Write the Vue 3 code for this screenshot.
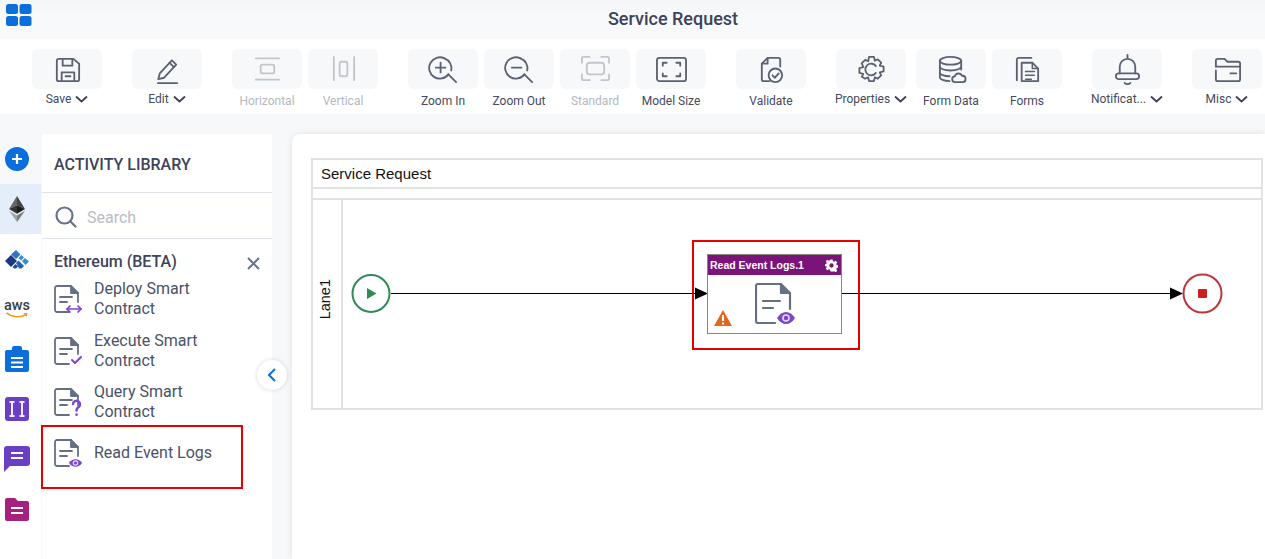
<script setup>
const toolGroups = [
  { tools: [{ id: 'save', label: 'Save', caret: true }] },
  { tools: [{ id: 'edit', label: 'Edit', caret: true }] },
  { tools: [
    { id: 'horizontal', label: 'Horizontal', off: true },
    { id: 'vertical', label: 'Vertical', off: true }
  ] },
  { tools: [
    { id: 'zoomin', label: 'Zoom In' },
    { id: 'zoomout', label: 'Zoom Out' },
    { id: 'standard', label: 'Standard', off: true },
    { id: 'model', label: 'Model Size' }
  ] },
  { tools: [{ id: 'validate', label: 'Validate' }] },
  { tools: [{ id: 'properties', label: 'Properties', caret: true }] },
  { wide: true, tools: [
    { id: 'formdata', label: 'Form Data' },
    { id: 'forms', label: 'Forms' }
  ] },
  { tools: [{ id: 'notif', label: 'Notificat...', caret: true }] },
  { tools: [{ id: 'misc', label: 'Misc', caret: true }] }
]

const activities = [
  { id: 'deploy', name: 'Deploy Smart Contract' },
  { id: 'execute', name: 'Execute Smart Contract' },
  { id: 'query', name: 'Query Smart Contract' },
  { id: 'read', name: 'Read Event Logs' }
]
</script>

<template>
  <div class="app">
    <header class="topbar">
      <svg class="logo" width="26" height="22" viewBox="0 0 26 22">
        <rect x="0" y="0" width="12" height="10" rx="2.5" />
        <rect x="13.500" y="0" width="12" height="10" rx="2.5" />
        <rect x="0" y="12" width="12" height="10" rx="2.5" />
        <rect x="13.500" y="12" width="12" height="10" rx="2.5" />
      </svg>
      <h1>Service Request</h1>
    </header>

    <nav class="toolbar">
      <div
        v-for="(group, g) in toolGroups"
        :key="g"
        class="tool-group"
        :class="{ wide: group.wide }"
      >
        <div
          v-for="tool in group.tools"
          :key="tool.id"
          class="tool"
          :class="{ off: tool.off, 'has-caret': tool.caret }"
        >
          <div class="tool-box">
            <svg viewBox="0 0 32 32" fill="none" stroke="currentColor" stroke-width="1.900" stroke-linecap="round" stroke-linejoin="round">
              <template v-if="tool.id === 'save'">
                <path d="M7 5h15l6 5v16a2 2 0 0 1-2 2H7a2 2 0 0 1-2-2V7a2 2 0 0 1 2-2z" />
                <path d="M11 5v7h10V5" />
                <path d="M10 28v-9h13v9" />
                <path d="M14 23h5" />
              </template>
              <template v-else-if="tool.id === 'edit'">
                <path d="M8 20l-1.500 6 6-1.500L25 11l-4.500-4.500z" />
                <path d="M18 9l4.500 4.500" />
                <path d="M6 30h20" />
              </template>
              <template v-else-if="tool.id === 'horizontal'">
                <path d="M4 4.500h24M4 26.500h24" />
                <rect x="9" y="11" width="14" height="9" rx="2" />
              </template>
              <template v-else-if="tool.id === 'vertical'">
                <path d="M6 3v24M27 3v24" />
                <rect x="12" y="8" width="8" height="15" rx="2" />
              </template>
              <template v-else-if="tool.id === 'zoomin'">
                <path d="M17 4.500a11 11 0 1 0 4 16.500" />
                <path d="M24 17a11 11 0 0 0-7-12.500" />
                <path d="M21 21l8 8M13 9v10M8 14h10" />
              </template>
              <template v-else-if="tool.id === 'zoomout'">
                <path d="M17 4.500a11 11 0 1 0 4 16.500" />
                <path d="M24 17a11 11 0 0 0-7-12.500" />
                <path d="M21 21l8 8M8 14h10" />
              </template>
              <template v-else-if="tool.id === 'standard'">
                <path d="M2 9V5a2 2 0 0 1 2-2h6M22 3h6a2 2 0 0 1 2 2v4M30 21v4a2 2 0 0 1-2 2h-6M10 27H4a2 2 0 0 1-2-2v-4" />
                <rect x="7" y="9" width="18" height="12" rx="3" />
              </template>
              <template v-else-if="tool.id === 'model'">
                <rect x="1" y="4" width="30" height="24" rx="2.500" />
                <path d="M7 12V9h4M21 9h4v3M25 20v3h-4M11 23H7v-3" />
              </template>
              <template v-else-if="tool.id === 'validate'">
                <path d="M14 28H8a2 2 0 0 1-2-2V10l6-6h11a2 2 0 0 1 2 2v7" />
                <path d="M6 10h6V4" />
                <circle cx="20" cy="22" r="7" />
                <path d="M17 22l2.500 2.500 4-4.500" />
              </template>
              <template v-else-if="tool.id === 'properties'">
                <path d="M13.500 3h5l1 4 3-1.500 3.500 3.500-1.500 3 4 1v5l-4 1 1.500 3-3.500 3.500-3-1.500-1 4h-5l-1-4-3 1.500L6 23.500l1.500-3-4-1v-5l4-1L6 9.500 9.500 6l3 1.500z" />
                <path d="M20.500 12.500a6 6 0 1 0 0 7" />
              </template>
              <template v-else-if="tool.id === 'formdata'">
                <ellipse cx="15" cy="7" rx="11" ry="4" />
                <path d="M4 7v17c0 2 4 4 10 4M26 7v9M4 13c0 2 4 4 11 4s11-2 11-4M4 19c0 2 4 4 10 4" />
                <path d="M20 29a3 3 0 0 1-.5-6 4 4 0 0 1 7.500-.5 3.200 3.200 0 0 1 .5 6.500z" />
              </template>
              <template v-else-if="tool.id === 'forms'">
                <path d="M5 27V6a2 2 0 0 1 2-2h13" />
                <path d="M10 9h11l6 6v13H10z" />
                <path d="M21 9v6h6M14 18h9M14 22h9M14 26h6" stroke-width="1.600" />
              </template>
              <template v-else-if="tool.id === 'notif'">
                <path d="M16 1v3" />
                <path d="M8 20v-7a8 8 0 0 1 16 0v7" />
                <rect x="4" y="20" width="24" height="6" rx="3" />
                <path d="M13 30c2 1.500 4 1.500 6 0" />
              </template>
              <template v-else>
                <path d="M4 13V7a2 2 0 0 1 2-2h7l3 3h11a2 2 0 0 1 2 2v16a2 2 0 0 1-2 2H6a2 2 0 0 1-2-2v-9" />
                <path d="M4 13h25M19 20h6" />
              </template>
            </svg>
          </div>
          <div class="tool-label">
            <span>{{ tool.label }}</span>
            <svg v-if="tool.caret" class="caret" width="13" height="8" viewBox="0 0 13 8" fill="none">
              <path d="M1 1.500l5.500 5 5.500-5" stroke="#3b4054" stroke-width="1.800" />
            </svg>
          </div>
        </div>
      </div>
    </nav>

    <main class="workspace">
      <aside class="rail">
        <div class="rail-cell tinted">
          <svg width="24" height="24" viewBox="0 0 24 24">
            <circle cx="12" cy="12" r="12" fill="#0a6fdb" />
            <path d="M12 7v10M7 12h10" stroke="#fff" stroke-width="2.200" />
          </svg>
        </div>
        <div class="rail-cell active">
          <svg width="16" height="26" viewBox="0 0 18 28" preserveAspectRatio="none">
            <polygon points="9,0 0,14 9,10" fill="#666" />
            <polygon points="9,0 18,14 9,10" fill="#444" />
            <polygon points="0,14 9,10 9,19" fill="#333" />
            <polygon points="18,14 9,10 9,19" fill="#1c1c1c" />
            <polygon points="0,16 9,21 9,28" fill="#a5a5a5" />
            <polygon points="18,16 9,21 9,28" fill="#7a7a7a" />
          </svg>
        </div>
        <div class="rail-cell">
          <svg width="24" height="19" viewBox="0 0 24 19">
            <polygon points="0,11 6,5 12,11 6,17" fill="#16397f" />
            <polygon points="6,4.500 11,0 15.500,4.500 11,9" fill="#2f74c8" />
            <polygon points="13.500,8 16.500,5 19,7.500 16,10.500" fill="#3d8ad6" />
            <polygon points="17,11 20,8 24,11.500 20.500,15" fill="#2f8fd8" />
            <polygon points="11,13 13.500,10.500 19,16 16.500,18.500 14,18.500" fill="#2262b4" />
            <polygon points="7.500,17 10.500,14 13,16.500 11,18.500 9,18.500" fill="#1c4f9e" />
          </svg>
        </div>
        <div class="rail-cell">
          <div class="aws">
            <span>aws</span>
            <svg width="24" height="7" viewBox="0 0 26 8" fill="none">
              <path d="M1 1c6 5 16 6 22 2" stroke="#f09a1a" stroke-width="1.600" />
              <path d="M20 1.500l5-.5-1 4.500z" fill="#f09a1a" />
            </svg>
          </div>
        </div>
        <div class="rail-cell">
          <svg width="24" height="26" viewBox="0 0 24 26">
            <path d="M2 4h5V2a2 2 0 0 1 2-2h6a2 2 0 0 1 2 2v2h5a2 2 0 0 1 2 2v18a2 2 0 0 1-2 2H2a2 2 0 0 1-2-2V6a2 2 0 0 1 2-2z" fill="#0a6fdb" />
            <path d="M6 12h12M6 16.500h12M6 21h12" stroke="#fff" stroke-width="1.800" />
          </svg>
        </div>
        <div class="rail-cell">
          <svg width="24" height="24" viewBox="0 0 24 24">
            <rect width="24" height="24" rx="3" fill="#6a3fc4" />
            <path d="M4.500 5h5M7 5v14M4.500 19h5M14.500 5h5M17 5v14M14.500 19h5" stroke="#f1eafc" stroke-width="2" />
          </svg>
        </div>
        <div class="rail-cell">
          <svg width="26" height="26" viewBox="0 0 26 26">
            <path d="M3 0h20a3 3 0 0 1 3 3v14a3 3 0 0 1-3 3H6l-6 6V3a3 3 0 0 1 3-3z" fill="#6a3fc4" />
            <path d="M7 7h12M7 12h12" stroke="#fff" stroke-width="2" />
          </svg>
        </div>
        <div class="rail-cell">
          <svg width="24" height="23" viewBox="0 0 24 23">
            <path d="M2 0h8l3 3h9a2 2 0 0 1 2 2v16a2 2 0 0 1-2 2H2a2 2 0 0 1-2-2V2a2 2 0 0 1 2-2z" fill="#a8207e" />
            <path d="M6 10h12M6 15h12" stroke="#fff" stroke-width="2" />
          </svg>
        </div>
      </aside>

      <section class="library">
        <h2>ACTIVITY LIBRARY</h2>
        <div class="search">
          <svg width="22" height="22" viewBox="0 0 22 22" fill="none" stroke="#69738a" stroke-width="2.200" stroke-linecap="round">
            <circle cx="9.500" cy="9.500" r="8" />
            <path d="M15.500 15.500l5 5" />
          </svg>
          <span>Search</span>
        </div>
        <div class="lib-title">
          <span>Ethereum (BETA)</span>
          <svg class="lib-close" width="13" height="13" viewBox="0 0 13 13" stroke="#69738a" stroke-width="2">
            <path d="M1 1l11 11M12 1L1 12" />
          </svg>
        </div>
        <ul class="activities">
          <li v-for="item in activities" :key="item.id">
            <svg class="doc" width="28" height="28" viewBox="0 0 28 28" fill="none" stroke="#667085" stroke-width="1.800" stroke-linecap="round" stroke-linejoin="round">
              <path d="M15 27H3a2 2 0 0 1-2-2V3a2 2 0 0 1 2-2h14l7 7v9" />
              <path d="M17 1v7h7" fill="#667085" />
              <path d="M6 12h12M6 17h7" />
              <g v-if="item.id === 'deploy'" stroke="#7a45cf" stroke-width="1.700">
                <path d="M13 24h14" />
                <path d="M16 21l-3 3 3 3M24 21l3 3-3 3" />
              </g>
              <path v-else-if="item.id === 'execute'" d="M18 23l3 3 6-6" stroke="#7a45cf" stroke-width="2" />
              <g v-else-if="item.id === 'query'" stroke="#7a45cf" stroke-width="2.500">
                <path d="M19 16a3.500 3.500 0 1 1 5 3.500c-1 .700-1.500 1.300-1.500 3" />
                <path d="M22.500 26.500v.2" />
              </g>
              <g v-else>
                <path d="M15 24c3-5 10-5 13 0-3 5-10 5-13 0z" fill="#7a45cf" stroke="none" />
                <circle cx="21.500" cy="24" r="2.200" fill="#7a45cf" stroke="#e5dcf7" stroke-width="1.200" />
              </g>
            </svg>
            <span>{{ item.name }}</span>
          </li>
        </ul>
        <div class="highlight highlight-item"></div>
      </section>

      <button class="collapse">
        <svg width="10" height="14" viewBox="0 0 10 14" fill="none">
          <path d="M8 1L2 7l6 6" stroke="#0a6fdb" stroke-width="2" />
        </svg>
      </button>

      <section class="canvas">
        <div class="pool">
          <div class="pool-title">Service Request</div>
          <div class="pool-band"></div>
          <div class="lane">
            <div class="lane-head"><span>Lane1</span></div>
            <div class="lane-body">
              <svg class="flow" width="920" height="208" viewBox="0 0 920 208" fill="none">
                <circle cx="28" cy="93.500" r="18.500" stroke="#2f8a55" stroke-width="2" fill="#fff" />
                <polygon points="24,88 24,99 33.500,93.500" fill="#2f8a55" />
                <path d="M48 93.500H353M499 93.500H828" stroke="#000" />
                <polygon points="352,87.500 365,93.500 352,99.500" fill="#000" />
                <polygon points="827,87.500 840,93.500 827,99.500" fill="#000" />
                <circle cx="859.500" cy="93.500" r="19" stroke="#bd3439" stroke-width="2" fill="#fff" />
                <rect x="855" y="89" width="9" height="9" rx="1" fill="#cc1f1f" />
              </svg>
              <div class="node">
                <div class="node-head">
                  <span>Read Event Logs.1</span>
                  <svg width="13" height="13" viewBox="0 0 24 24">
                    <path fill="#fff" fill-rule="evenodd" d="M10 1h4l.7 3.200 2.200.9 2.800-1.800 2.900 2.900-1.800 2.800.9 2.200 3.200.7v4l-3.200.7-.9 2.200 1.800 2.800-2.900 2.900-2.800-1.800-2.200.9L14 23h-4l-.7-3.200-2.200-.9-2.800 1.800-2.900-2.900 1.800-2.800-.9-2.200L-.9 14v-4l3.200-.7.9-2.200L1.400 4.300l2.900-2.900 2.800 1.800 2.200-.9zM12 8a4 4 0 1 0 0 8 4 4 0 0 0 0-8z" />
                  </svg>
                </div>
                <div class="node-body">
                  <svg class="node-doc" width="41" height="41" viewBox="0 0 41 41" fill="none" stroke="#667085" stroke-width="2.200" stroke-linecap="round" stroke-linejoin="round">
                    <path d="M20 40H3a2 2 0 0 1-2-2V3a2 2 0 0 1 2-2h23l9 9v16" />
                    <path d="M26 1v9h9" fill="#667085" />
                    <path d="M8 18h17M8 25h10" />
                    <path d="M22 34c5-8 13-8 18 0-5 8-13 8-18 0z" fill="#7a45cf" stroke="none" transform="translate(0 1)" />
                    <circle cx="31" cy="35" r="3" fill="#7a45cf" stroke="#e5dcf7" stroke-width="1.600" />
                  </svg>
                  <svg class="node-warn" width="18" height="16" viewBox="0 0 18 16">
                    <path d="M9 0l9 16H0z" fill="#e0691b" />
                    <path d="M9 5v6M9 12.500v2" stroke="#fff" stroke-width="2" />
                  </svg>
                </div>
              </div>
              <div class="highlight highlight-node"></div>
            </div>
          </div>
        </div>
      </section>
    </main>
  </div>
</template>

<style>
html, body { margin: 0; overflow: hidden; }
</style>

<style scoped>
.app {
  width: 1265px;
  height: 559px;
  display: flex;
  flex-direction: column;
  font-family: Roboto, "Liberation Sans", sans-serif;
  background: #f7f8fa;
  color: #3b4054;
  overflow: hidden;
}

.topbar {
  height: 39px;
  flex: none;
  box-sizing: border-box;
  padding-bottom: 2px;
  position: relative;
  display: flex;
  align-items: center;
  justify-content: center;
  background: linear-gradient(#f4f5f7, #f8f9fb 40%);
}
.logo { position: absolute; left: 6px; top: 4px; fill: #0a6fdb; }
.topbar h1 {
  margin: 0;
  font-size: 18px;
  font-weight: 500;
  color: #3e4358;
  position: relative;
  left: 40.500px;
}

.toolbar {
  height: 75px;
  flex: none;
  box-sizing: border-box;
  background: #fff;
  display: flex;
  gap: 30px;
  padding: 10px 0 0 32px;
}
.tool-group { display: flex; gap: 6px; }
.tool-group.wide { margin-left: -20px; }
.tool { width: 70px; display: flex; flex-direction: column; align-items: center; }
.tool-box {
  width: 70px;
  height: 40px;
  background: #f7f8fa;
  border-radius: 6px;
  display: flex;
  align-items: center;
  justify-content: center;
  color: #5c6272;
}
.tool-box svg { width: 31px; height: 31px; }
.tool.off .tool-box { color: #c2c5cc; }
.tool-label {
  height: 22px;
  margin-top: 1px;
  display: flex;
  align-items: center;
  gap: 4px;
  font-size: 12px;
  white-space: nowrap;
  color: #454a5e;
}
.tool.has-caret .tool-label { margin-top: 0; height: 20px; }
.tool.off .tool-label { color: #b4b8c0; }

.workspace { flex: 1; position: relative; display: flex; min-height: 0; }

.rail {
  width: 41px;
  flex: none;
  background: #fff;
  display: flex;
  flex-direction: column;
}
.rail-cell {
  height: 50px;
  flex: none;
  box-sizing: border-box;
  padding-right: 7px;
  display: flex;
  align-items: center;
  justify-content: center;
}
.rail-cell.tinted { height: 70px; padding-top: 20px; background: #f7f8fa; }
.rail-cell.active { background: #e3eefa; }
.aws { display: flex; flex-direction: column; align-items: center; line-height: 12px; }
.aws span {
  font-family: Roboto, sans-serif;
  font-weight: 500;
  font-size: 14.500px;
  color: #333e48;
}

.library {
  width: 230px;
  margin: 20px 0 0 1px;
  flex: none;
  position: relative;
  background: #fff;
}
.library h2 {
  margin: 0;
  height: 59px;
  box-sizing: border-box;
  padding: 21px 0 0 12px;
  font-size: 16px;
  line-height: 19px;
  font-weight: 500;
  color: #3e4358;
  border-bottom: 1px solid #e0e1e8;
}
.search {
  height: 46px;
  box-sizing: border-box;
  display: flex;
  align-items: center;
  gap: 10px;
  padding: 3px 0 0 13px;
  font-size: 16px;
  color: #b9bcc4;
  border-bottom: 1px solid #e0e1e8;
}
.lib-title {
  display: flex;
  justify-content: space-between;
  align-items: center;
  height: 40.300px;
  box-sizing: border-box;
  padding: 4px 12px 0;
  font-size: 16px;
  font-weight: 500;
  color: #3e4358;
}
.lib-close { position: relative; top: 2px; }
.activities {
  list-style: none;
  margin: 0;
  padding: 0 0 0 12px;
  display: grid;
  row-gap: 11.300px;
}
.activities li {
  height: 40px;
  display: flex;
  align-items: center;
  gap: 12px;
  font-size: 16px;
  line-height: 20px;
  color: #4b5169;
}
.activities li span { width: 125px; }
.doc { flex: none; }

.highlight { position: absolute; box-sizing: border-box; border: 2px solid #e60000; pointer-events: none; }
.highlight-item { left: -1px; top: 291px; width: 202px; height: 64px; }

.collapse {
  position: absolute;
  left: 257px;
  top: 246px;
  width: 30px;
  height: 30px;
  padding: 0;
  border: none;
  border-radius: 50%;
  background: #fff;
  box-shadow: 0 0 4px rgba(60, 64, 90, 0.2);
  display: flex;
  align-items: center;
  justify-content: center;
  z-index: 2;
}

.canvas {
  flex: 1;
  margin: 20px 0 0 20px;
  background: #fff;
  border-radius: 8px 0 0 0;
  box-shadow: 0 0 6px rgba(60, 64, 90, 0.12);
  padding: 24px 2px 0 19px;
}
.pool {
  height: 252px;
  box-sizing: border-box;
  border: 2px solid #e2e2e2;
  display: flex;
  flex-direction: column;
  font-family: "Liberation Sans", sans-serif;
  color: #111;
}
.pool-title {
  height: 29px;
  flex: none;
  box-sizing: border-box;
  padding: 5px 0 0 8px;
  font-size: 15px;
  line-height: 18px;
  border-bottom: 2px solid #e2e2e2;
}
.pool-band {
  height: 9px;
  flex: none;
  border-bottom: 2px solid #e2e2e2;
}
.lane { flex: 1; display: flex; min-height: 0; }
.lane-head {
  width: 28px;
  flex: none;
  border-right: 2px solid #e2e2e2;
  display: flex;
  align-items: center;
  justify-content: center;
  padding-bottom: 10px;
  box-sizing: content-box;
}
.lane-head span {
  writing-mode: vertical-rl;
  transform: rotate(180deg);
  font-size: 14.500px;
  margin-right: 4px;
}
.lane-body { flex: 1; position: relative; }
.flow { position: absolute; left: 0; top: 0; }

.node {
  position: absolute;
  left: 364px;
  top: 54px;
  width: 135px;
  height: 80px;
  box-sizing: border-box;
  border: 1px solid #8a8778;
  background: #fff;
}
.node-head {
  height: 20px;
  background: #7b1478;
  color: #fff;
  font-size: 10.500px;
  font-weight: 700;
  display: flex;
  align-items: center;
  justify-content: space-between;
  padding: 0 3px 0 2px;
}
.node-body { position: relative; height: 58px; }
.node-doc { position: absolute; left: 47px; top: 8px; }
.node-warn { position: absolute; left: 6px; top: 35px; }
.highlight-node { left: 349px; top: 40px; width: 168px; height: 110px; }
</style>
